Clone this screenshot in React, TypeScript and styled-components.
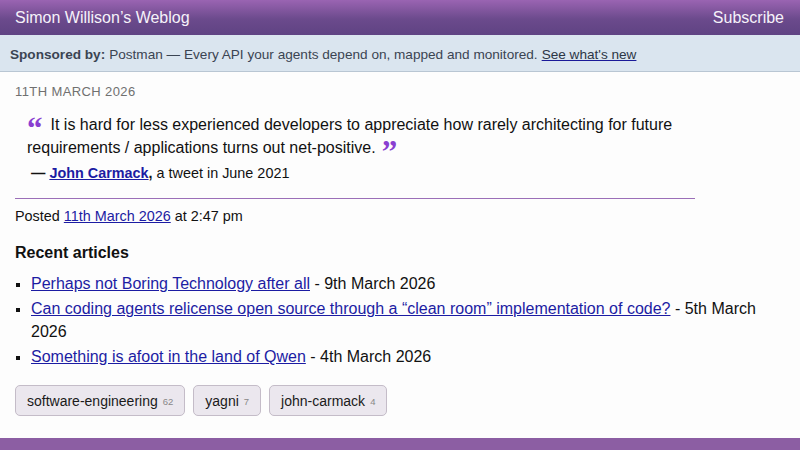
import React from "react";
import styled, { createGlobalStyle } from "styled-components";

const Global = createGlobalStyle`
  html, body { margin: 0; padding: 0; background: #fdfdfd; }
  body { font-family: "Liberation Sans", Arial, Helvetica, sans-serif; color: #111; }
  * { box-sizing: border-box; }
`;

const Page = styled.div`
  width: 800px;
  height: 450px;
  display: flex;
  flex-direction: column;
  overflow: hidden;
  background: #fdfdfd;
`;

const Header = styled.header`
  height: 35px;
  flex: 0 0 35px;
  display: flex;
  align-items: center;
  justify-content: space-between;
  padding: 1px 16px 0 15px;
  background: linear-gradient(180deg, #9a64b2 0%, #6b4a8c 55%, #5f4383 100%);
  color: #f6f2fa;
  font-size: 16px;
`;

const HeaderLink = styled.span`
  color: #f6f2fa;
`;

const Sponsor = styled.div`
  flex: 0 0 37px;
  display: flex;
  align-items: center;
  padding: 2px 10px 0 10px;
  background: #dae5ef;
  border-bottom: 1px solid #b9c6d3;
  color: #3a4452;
  font-size: 13.6px;
`;

const Bold = styled.strong`
  font-weight: bold;
  margin-right: 4px;
`;

const SponsorLink = styled.a`
  color: #2c3645;
  text-decoration: underline;
  text-decoration-color: #1a1a99;
  margin-left: 4px;
`;

const Main = styled.main`
  flex: 1;
  padding: 12px 15px 0 15px;
`;

const DateLine = styled.div`
  font-size: 13px;
  color: #707070;
  text-transform: uppercase;
  letter-spacing: 0.4px;
  line-height: 16px;
`;

const Quote = styled.blockquote`
  margin: 13px 0 0 12px;
  font-size: 16px;
  line-height: 23px;
  color: #111;
  width: 665px;
`;

const Mark = styled.span<{ $close?: boolean }>`
  color: #8a3fd1;
  font-family: "Liberation Serif", "Times New Roman", serif;
  font-weight: bold;
  font-size: 31px;
  line-height: 0;
  margin: ${(p) => (p.$close ? "0 0 0 6px" : "0 8px 0 0")};
  position: relative;
  top: 9px;
`;

const Cite = styled.p`
  margin: 5px 0 0 16px;
  font-size: 14.4px;
  line-height: 18px;
`;

const Link = styled.a<{ $bold?: boolean }>`
  color: #1c1ca3;
  text-decoration: underline;
  font-weight: ${(p) => (p.$bold ? "bold" : "normal")};
`;

const Rule = styled.hr`
  width: 680px;
  margin: 16px 0 0 0;
  border: 0;
  height: 1px;
  background: #9b6fb8;
`;

const Posted = styled.p`
  margin: 8px 0 0 0;
  font-size: 14.4px;
  line-height: 18px;
`;

const SectionTitle = styled.h3`
  margin: 18px 0 0 0;
  font-size: 16px;
  line-height: 20px;
  font-weight: bold;
`;

const List = styled.ul`
  margin: 9px 0 0 0;
  padding: 0 0 0 16px;
  list-style: square;
  font-size: 16px;
  line-height: 23px;
  width: 760px;
`;

const Item = styled.li`
  margin-bottom: 2px;
  &::marker { font-size: 13px; }
`;

const Tags = styled.div`
  display: flex;
  gap: 8px;
  margin-top: 17px;
`;

const Tag = styled.span`
  display: inline-flex;
  align-items: center;
  height: 31px;
  padding: 0 11px 0 11px;
  background: #ebe7ee;
  border: 1px solid #c4bcc8;
  border-radius: 5px;
  font-size: 14px;
  color: #1a1a1a;
`;

const Count = styled.span`
  font-size: 9.5px;
  color: #888;
  margin-left: 5px;
  padding-top: 2px;
`;

const Footer = styled.footer`
  flex: 0 0 12px;
  background: #8c5ea3;
`;

const tags = [
  { name: "software-engineering", count: 62 },
  { name: "yagni", count: 7 },
  { name: "john-carmack", count: 4 },
];

export default function App() {
  return (
    <Page>
      <Global />
      <Header>
        <HeaderLink>Simon Willison’s Weblog</HeaderLink>
        <HeaderLink>Subscribe</HeaderLink>
      </Header>
      <Sponsor>
        <Bold>Sponsored by:</Bold> Postman — Every API your agents depend on, mapped and monitored.
        <SponsorLink>See what's new</SponsorLink>
      </Sponsor>
      <Main>
        <DateLine>11th March 2026</DateLine>
        <Quote>
          <Mark>“</Mark>It is hard for less experienced developers to appreciate how rarely architecting for future
          requirements / applications turns out net-positive.<Mark $close>”</Mark>
        </Quote>
        <Cite>
          <strong>— </strong>
          <Link $bold>John Carmack</Link>
          <strong>,</strong> a tweet in June 2021
        </Cite>
        <Rule />
        <Posted>
          Posted <Link>11th March 2026</Link> at 2:47 pm
        </Posted>
        <SectionTitle>Recent articles</SectionTitle>
        <List>
          <Item>
            <Link>Perhaps not Boring Technology after all</Link> - 9th March 2026
          </Item>
          <Item>
            <Link>Can coding agents relicense open source through a “clean room” implementation of code?</Link> - 5th March 2026
          </Item>
          <Item>
            <Link>Something is afoot in the land of Qwen</Link> - 4th March 2026
          </Item>
        </List>
        <Tags>
          {tags.map((t) => (
            <Tag key={t.name}>
              {t.name}
              <Count>{t.count}</Count>
            </Tag>
          ))}
        </Tags>
      </Main>
      <Footer />
    </Page>
  );
}
